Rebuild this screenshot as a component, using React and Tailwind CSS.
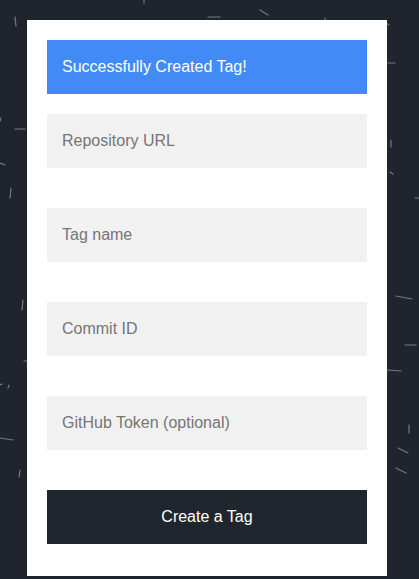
import React from "react";

const streaks = [
  [15, 17, 16, 26], [208, 17, 220, 17], [260, 10, 268, 15], [325, 18, 325, 21], [144, 0, 144, 3],
  [386, 23, 389, 25], [388, 63, 395, 63], [15, 129, 25, 129], [0, 121, 1, 118], [0, 163, 5, 165],
  [11, 188, 10, 198], [23, 300, 22, 310], [0, 385, 2, 384], [8, 388, 9, 385], [24, 361, 27, 361],
  [0, 438, 13, 440], [20, 470, 19, 477], [391, 140, 391, 147], [390, 172, 393, 174], [415, 198, 419, 198],
  [396, 296, 412, 299], [405, 345, 416, 345], [387, 370, 401, 371], [409, 425, 409, 433],
  [398, 448, 408, 453], [396, 468, 406, 473],
];

export default function App() {
  return (
    <div className="relative min-h-[579px] w-full overflow-hidden bg-[#20252d] pt-5 font-['Liberation_Sans',Arial,sans-serif]">
      <svg className="pointer-events-none absolute left-0 top-0" width="419" height="579">
        {streaks.map(([x1, y1, x2, y2], i) => (
          <line key={i} x1={x1} y1={y1} x2={x2} y2={y2} stroke="#8a9099" strokeWidth="1.2" strokeLinecap="round" opacity="0.8" />
        ))}
      </svg>
      <div className="relative ml-[27px] flex w-[360px] flex-col bg-white px-5 pt-5 pb-8">
        <div className="flex h-[54px] items-center bg-[#428bf7] px-[15px] text-base text-white">
          Successfully Created Tag!
        </div>
        <div className="mt-5 flex flex-col gap-10">
          {["Repository URL", "Tag name", "Commit ID", "GitHub Token (optional)"].map((p) => (
            <input
              key={p}
              placeholder={p}
              className="h-[54px] w-full bg-[#f1f1f1] px-[15px] text-base text-[#333] outline-none placeholder:text-[#757575]"
            />
          ))}
          <button className="h-[54px] w-full bg-[#20262e] text-base text-white">Create a Tag</button>
        </div>
      </div>
    </div>
  );
}
